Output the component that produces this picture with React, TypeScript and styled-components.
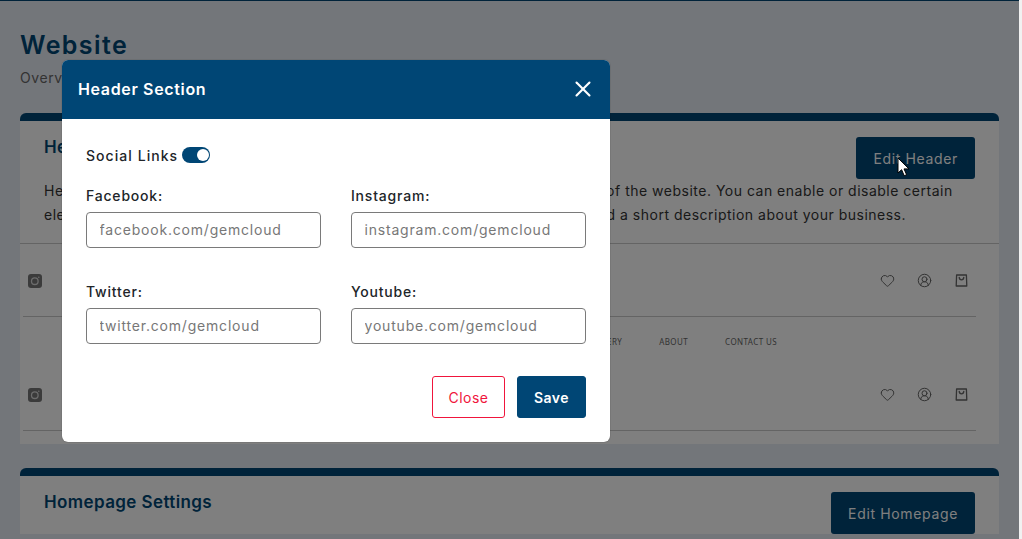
import styled, { createGlobalStyle } from 'styled-components';
import { Heart, CircleUserRound, X } from 'lucide-react';

const GlobalStyle = createGlobalStyle`
  html, body {
    margin: 0;
    padding: 0;
    height: 539px;
    overflow: hidden;
    background: #f1f1f1;
  }

  * {
    box-sizing: border-box;
  }
`;

const Shell = styled.div`
  width: 1022px;
  height: 539px;
  display: flex;
  overflow: hidden;
  font-family: 'Inter', 'Liberation Sans', sans-serif;
`;

const Page = styled.main`
  position: relative;
  width: 1019px;
  height: 539px;
  overflow: hidden;
  flex: none;
  padding: 30px 20px 0;
  background: #e6edf5;
  box-shadow: inset 0 1px 0 #004674;
`;

const ScrollTrack = styled.div`
  flex: 1;
  background: #f1f1f1;
`;

const PageTitle = styled.h1`
  margin: 0;
  font-size: 25px;
  line-height: 30px;
  font-weight: 600;
  letter-spacing: 1.4px;
  color: #004674;
`;

const PageSubtitle = styled.p`
  margin: 8px 0 25px;
  font-size: 14px;
  line-height: 20px;
  letter-spacing: 0.6px;
  color: #666;
`;

const Card = styled.section`
  background: #fff;
  border-top: 8px solid #004674;
  border-radius: 6px 6px 0 0;
  margin-bottom: 24px;
`;

const CardHead = styled.div`
  display: flex;
  align-items: flex-start;
  justify-content: space-between;
  padding: 16px 24px 0;
`;

const CardTitle = styled.h2`
  margin: 0;
  font-size: 17px;
  line-height: 20px;
  font-weight: 600;
  letter-spacing: 0.4px;
  color: #004674;
`;

const EditButton = styled.button`
  height: 42px;
  padding: 0 17px;
  border: none;
  border-radius: 3px;
  background: #004674;
  color: #fff;
  font: 400 14px 'Inter', sans-serif;
  letter-spacing: 0.65px;
`;

const Description = styled.p`
  margin: 0;
  padding: 0 24px 16px;
  height: 64px;
  font-size: 14px;
  line-height: 24px;
  letter-spacing: 0.5px;
  color: #333;
  white-space: nowrap;
`;

const Previews = styled.div`
  border-top: 1px solid #c8c8c8;
  padding: 0 23px 0 3px;
  height: 201px;
`;

const PreviewRow = styled.div<{ $tall?: boolean }>`
  height: ${(p) => (p.$tall ? 114 : 73)}px;
  border-bottom: 1px solid #c8c8c8;
  display: flex;
  flex-direction: column;
  justify-content: flex-start;
`;

const NavLinks = styled.nav`
  display: flex;
  justify-content: flex-end;
  gap: 37px;
  padding: 20px 199px 0 0;
  height: 30px;
  font-family: 'Noto Sans', sans-serif;
  font-size: 8px;
  line-height: 10px;
  letter-spacing: 0.4px;
  color: #666;
`;

const IconBar = styled.div<{ $top: number }>`
  display: flex;
  align-items: center;
  justify-content: space-between;
  padding: ${(p) => p.$top}px 7px 0 5px;
  color: #666;
`;

const IconGroup = styled.div`
  display: flex;
  align-items: center;
  gap: 22px;
`;

const Modal = styled.div`
  position: absolute;
  left: 62px;
  top: 60px;
  width: 548px;
  height: 382px;
  z-index: 3;
  background: #fff;
  border-radius: 6px;
  overflow: hidden;
  box-shadow: 0 0 1px rgba(0, 0, 0, 0.6);
`;

const ModalHead = styled.header`
  height: 59px;
  padding: 0 14px 2px 16px;
  display: flex;
  align-items: center;
  justify-content: space-between;
  background: #004675;
  color: #fff;
`;

const ModalTitle = styled.h3`
  margin: 0;
  font-size: 16px;
  font-weight: 600;
  letter-spacing: 0.65px;
`;

const CloseIcon = styled.button`
  display: flex;
  padding: 0;
  border: none;
  background: none;
  color: #fff;
`;

const ModalBody = styled.div`
  padding: 27px 24px 0;
`;

const SwitchRow = styled.div`
  display: flex;
  align-items: center;
  gap: 4px;
  height: 18px;
  margin-bottom: 22px;
  font-size: 14px;
  font-weight: 500;
  letter-spacing: 1.05px;
  color: #212529;
`;

const Switch = styled.span`
  width: 28px;
  height: 16px;
  display: flex;
  justify-content: flex-end;
  align-items: center;
  padding: 0 1.5px;
  border-radius: 8px;
  background: #004675;

  &::after {
    content: '';
    width: 12px;
    height: 12px;
    border-radius: 50%;
    background: #fff;
  }
`;

const FieldGrid = styled.div`
  display: grid;
  grid-template-columns: 235px 235px;
  column-gap: 30px;
  row-gap: 34px;
`;

const Field = styled.label`
  display: block;
  font-size: 14px;
  font-weight: 500;
  line-height: 20px;
  letter-spacing: 0.8px;
  color: #212529;
`;

const Input = styled.input`
  display: block;
  width: 235px;
  height: 36px;
  margin-top: 6px;
  padding: 0 12.5px 2px;
  border: 1px solid #7a7a7a;
  border-radius: 4px;
  font: 400 14px 'Inter', sans-serif;
  letter-spacing: 0.8px;
  outline: none;

  &::placeholder {
    color: #777;
    opacity: 1;
  }
`;

const Actions = styled.div`
  display: flex;
  justify-content: flex-end;
  gap: 12px;
  margin-top: 32px;
`;

const ActionButton = styled.button<{ $outline?: boolean }>`
  height: 42px;
  padding: 0;
  width: ${(p) => (p.$outline ? 73 : 69)}px;
  border-radius: 3px;
  border: 1px solid ${(p) => (p.$outline ? '#f0153c' : '#004675')};
  background: ${(p) => (p.$outline ? '#fff' : '#004675')};
  color: ${(p) => (p.$outline ? '#f0153c' : '#fff')};
  font: ${(p) => (p.$outline ? 400 : 600)} 14px 'Inter', sans-serif;
  letter-spacing: 0.45px;
`;

const Backdrop = styled.div`
  position: absolute;
  inset: 0;
  z-index: 2;
  background: rgba(0, 0, 0, 0.5);
`;

const Pointer = styled.svg`
  position: absolute;
  left: 897px;
  top: 157px;
  z-index: 4;
`;

function InstagramGlyph() {
  return (
    <svg width="14" height="14" viewBox="0 0 14 14">
      <rect width="14" height="14" rx="3" fill="#767676" />
      <circle cx="6.8" cy="7.2" r="3.3" fill="none" stroke="#d8d8d8" strokeWidth="1.3" />
      <circle cx="10.8" cy="3.2" r="0.8" fill="#d8d8d8" />
    </svg>
  );
}

function BagGlyph() {
  return (
    <svg width="15" height="15" viewBox="0 0 15 15" fill="none" stroke="currentColor" strokeWidth="1.3">
      <path d="M2.6 2h9.8l.4 11H2.2z" strokeLinejoin="round" />
      <path d="M5.2 4.4c.2 3.2 4.4 3.2 4.6 0" strokeLinecap="round" />
    </svg>
  );
}

function HeaderIcons({ top }: { top: number }) {
  return (
    <IconBar $top={top}>
      <InstagramGlyph />
      <IconGroup>
        <Heart size={15} strokeWidth={1.6} />
        <CircleUserRound size={15} strokeWidth={1.6} />
        <BagGlyph />
      </IconGroup>
    </IconBar>
  );
}

export default function App() {
  return (
    <>
      <GlobalStyle />
      <Shell>
        <Page>
          <PageTitle>Website</PageTitle>
          <PageSubtitle>Overview of your website sections and settings</PageSubtitle>

          <Card>
            <CardHead>
              <CardTitle>Header Settings</CardTitle>
              <EditButton>Edit Header</EditButton>
            </CardHead>
            <Description>
              Header settings let you manage the elements that show at the very top section of the website. You can enable or disable certain
              <br />
              elements such as social links and navigation menus, and you can also easily add a short description about your business.
            </Description>
            <Previews>
              <PreviewRow>
                <HeaderIcons top={29} />
              </PreviewRow>
              <PreviewRow $tall>
                <NavLinks>
                  <span>GALLERY</span>
                  <span>ABOUT</span>
                  <span>CONTACT US</span>
                </NavLinks>
                <HeaderIcons top={40} />
              </PreviewRow>
            </Previews>
          </Card>

          <Card>
            <CardHead>
              <CardTitle>Homepage Settings</CardTitle>
              <EditButton>Edit Homepage</EditButton>
            </CardHead>
          </Card>

          <Backdrop />

          <Modal>
            <ModalHead>
              <ModalTitle>Header Section</ModalTitle>
              <CloseIcon aria-label="Close">
                <X size={26} strokeWidth={1.9} />
              </CloseIcon>
            </ModalHead>
            <ModalBody>
              <SwitchRow>
                Social Links <Switch />
              </SwitchRow>
              <FieldGrid>
                <Field>
                  Facebook:
                  <Input placeholder="facebook.com/gemcloud" />
                </Field>
                <Field>
                  Instagram:
                  <Input placeholder="instagram.com/gemcloud" />
                </Field>
                <Field>
                  Twitter:
                  <Input placeholder="twitter.com/gemcloud" />
                </Field>
                <Field>
                  Youtube:
                  <Input placeholder="youtube.com/gemcloud" />
                </Field>
              </FieldGrid>
              <Actions>
                <ActionButton $outline>Close</ActionButton>
                <ActionButton>Save</ActionButton>
              </Actions>
            </ModalBody>
          </Modal>

          <Pointer width="13" height="20" viewBox="0 0 13 20">
            <path d="M1 1v15l3.6-3.3 2.6 6 2.4-1-2.6-5.8H12z" fill="#fff" stroke="#000" strokeWidth="1" />
          </Pointer>
        </Page>
        <ScrollTrack />
      </Shell>
    </>
  );
}
